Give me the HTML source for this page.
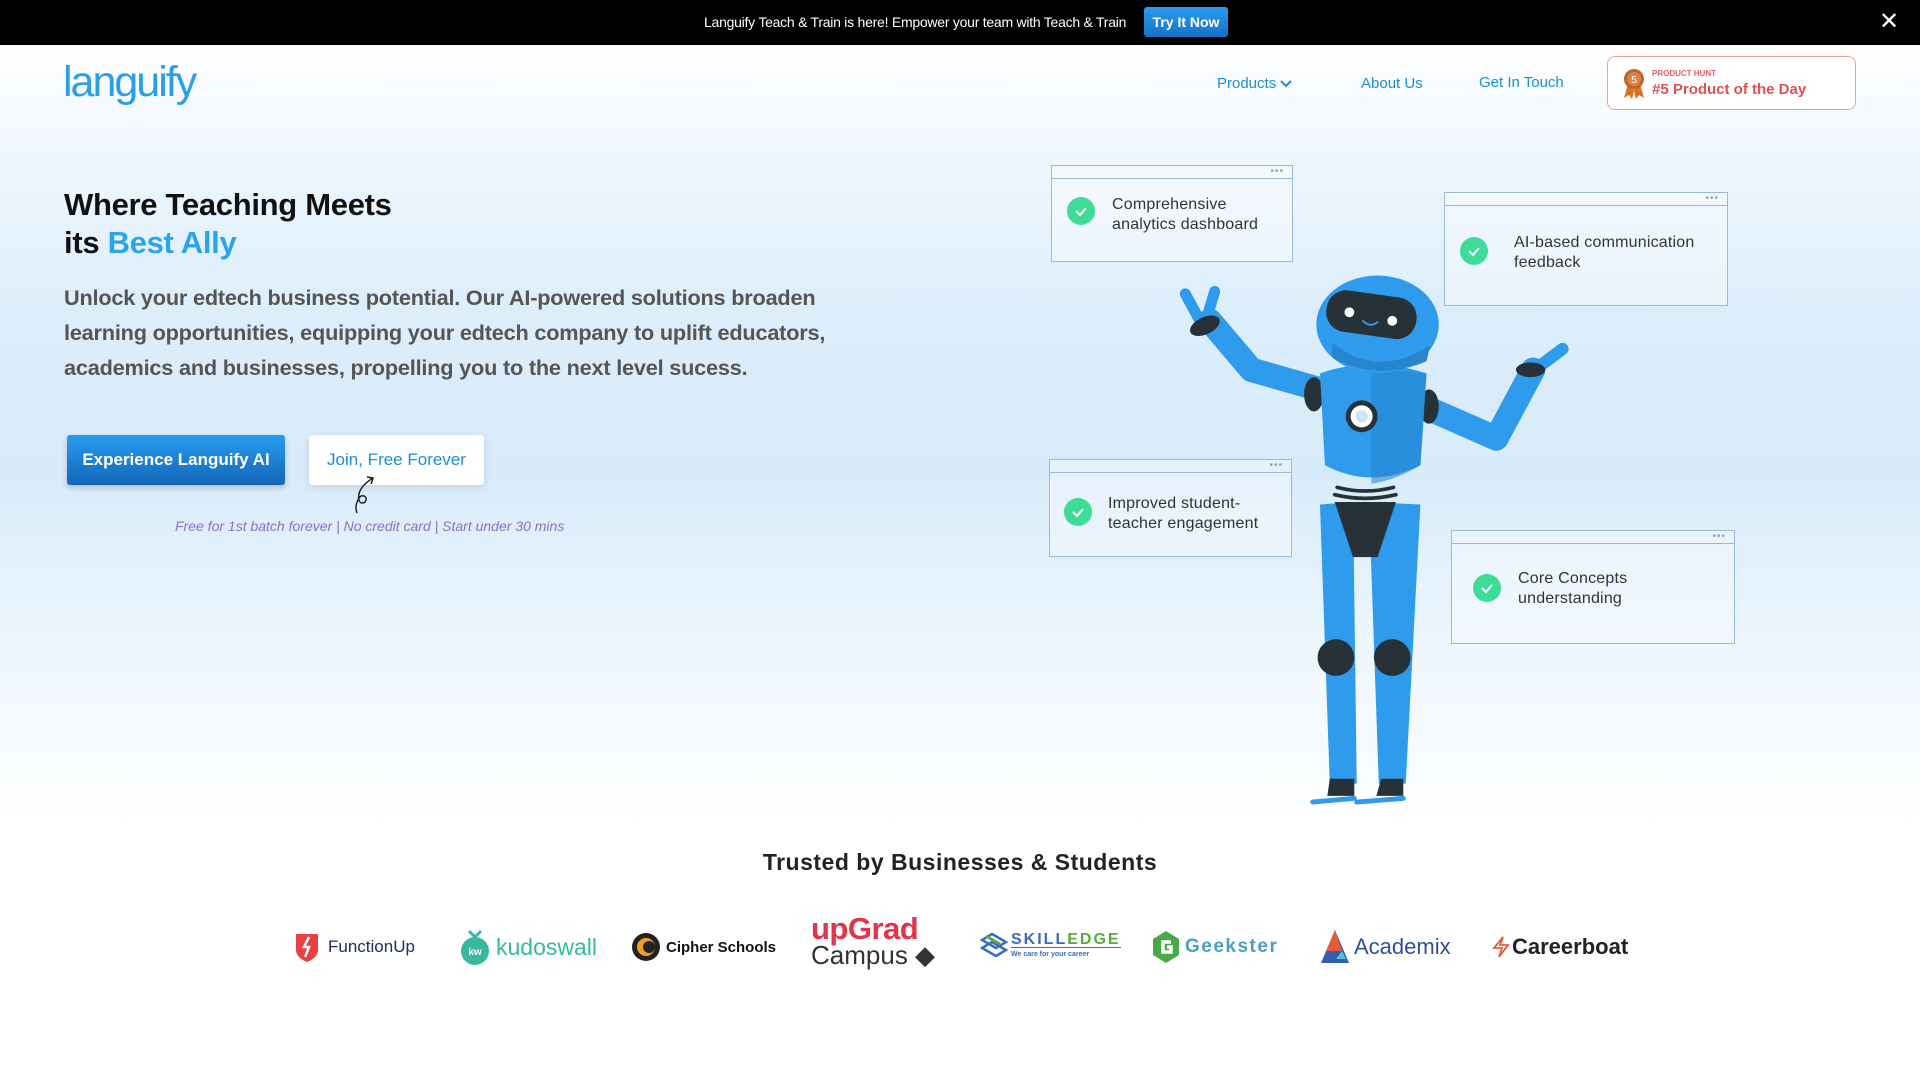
<!DOCTYPE html>
<html><head><meta charset="utf-8"><style>
*{margin:0;padding:0;box-sizing:border-box}
body{width:1920px;height:1080px;overflow:hidden;font-family:"Liberation Sans",sans-serif;background:#fff;position:relative}
.top{position:absolute;left:0;top:0;width:1920px;height:45px;background:#000;color:#fff}
.top .t{position:absolute;left:704px;top:14px;font-size:14px;letter-spacing:-0.25px}
.top .b{position:absolute;left:1144px;top:7px;width:84px;height:30px;background:linear-gradient(#2a9cf0,#1572c8);border-radius:3px;color:#fff;font-size:14px;font-weight:bold;text-align:center;line-height:30px}
.top .x{position:absolute;left:1879px;top:10px;font-size:24px;line-height:24px}
.hero{position:absolute;left:0;top:45px;width:1920px;height:780px;background:linear-gradient(180deg,#fff 0%,#f3f9fe 10%,#dcedfb 35%,#d8ebfa 55%,#ebf5fd 75%,#fff 100%)}
.logo{position:absolute;left:63px;top:58px;font-size:43px;color:#2a9fe8;letter-spacing:-2px;font-weight:normal}
.nav{position:absolute;top:75px;font-size:15px;color:#1a8fd8}
.badge{position:absolute;left:1607px;top:56px;width:249px;height:54px;border:1.5px solid #e8a0a0;border-radius:8px;background:#fff}
.badge .s{position:absolute;left:44px;top:12px;font-size:8px;font-weight:bold;color:#e46060}
.badge .l{position:absolute;left:44px;top:24px;font-size:15px;font-weight:bold;color:#e05050}
h1{position:absolute;left:64px;top:186px;font-size:31px;line-height:38px;color:#111;font-weight:bold;letter-spacing:-0.3px}
h1 span{color:#2aa5ec}
.p{position:absolute;left:64px;top:280px;width:800px;font-size:21.7px;line-height:35px;color:#555;font-weight:bold;letter-spacing:-0.2px}
.b1{position:absolute;left:67px;top:435px;width:218px;height:50px;background:linear-gradient(#2a9cf0,#1366b8);color:#fff;font-size:17px;font-weight:bold;text-align:center;line-height:50px;border-radius:3px;box-shadow:0 3px 6px rgba(0,0,0,.2)}
.b2{position:absolute;left:309px;top:435px;width:175px;height:50px;background:#fff;color:#1a8fd8;font-size:17px;text-align:center;line-height:50px;border-radius:3px;box-shadow:0 2px 8px rgba(0,0,0,.12)}
.sm{position:absolute;left:175px;top:518px;font-size:14px;font-style:italic;color:#8a70c8}
.card{position:absolute;border:1.5px solid #9bbad6;background:rgba(255,255,255,.35)}
.card .bar{position:absolute;left:0;right:0;top:12px;border-top:1.5px solid #9bbad6}
.card .d{position:absolute;right:8px;top:0;font-size:10px;color:#8aa;letter-spacing:1px}
.card .c{position:absolute;width:30px;height:30px}
.card .tx{position:absolute;font-size:16px;line-height:20px;color:#333;letter-spacing:.2px}
.tr{position:absolute;left:0;width:1920px;top:849px;text-align:center;font-size:23px;font-weight:bold;color:#222;letter-spacing:.5px}
.lg{position:absolute;top:929px;height:36px;display:flex;align-items:center;font-weight:bold}
</style></head><body>
<div class="top"><div class="t">Languify Teach &amp; Train is here! Empower your team with Teach &amp; Train</div><div class="b">Try It Now</div><div class="x">✕</div></div>
<div class="hero"></div>
<div class="logo">languify</div>
<div class="nav" style="left:1217px">Products <svg width="12" height="8" viewBox="0 0 12 8"><path d="M1 1l5 5 5-5" stroke="#1a8fd8" stroke-width="2" fill="none"/></svg></div>
<div class="nav" style="left:1361px">About Us</div>
<div class="nav" style="left:1479px;top:74px">Get In Touch</div>
<div class="badge"><svg style="position:absolute;left:14px;top:11px" width="24" height="32" viewBox="0 0 24 32"><path d="M6 16l-4 14 5-3 3 4 3-12z M18 16l4 14-5-3-3 4-3-12z" fill="#d9731f"/><circle cx="12" cy="11" r="10" fill="#c0642a"/><circle cx="12" cy="11" r="7" fill="#d98447"/><text x="12" y="15" font-size="10" fill="#fff" text-anchor="middle" font-family="Liberation Sans">5</text></svg><div class="s">PRODUCT HUNT</div><div class="l">#5 Product of the Day</div></div>
<h1>Where Teaching Meets<br>its <span>Best Ally</span></h1>
<div class="p">Unlock your edtech business potential. Our AI-powered solutions broaden learning opportunities, equipping your edtech company to uplift educators, academics and businesses, propelling you to the next level sucess.</div>
<div class="b1">Experience Languify AI</div>
<div class="b2">Join, Free Forever</div>
<svg style="position:absolute;left:345px;top:474px" width="30" height="42" viewBox="0 0 30 42"><path d="M28 4C18 10 12 18 14 26c1 4 6 4 7 0 1-4-4-6-7-2-3 5-4 10-2 15" stroke="#222" stroke-width="1.5" fill="none"/><path d="M22 3l6 1-2 6" stroke="#222" stroke-width="1.5" fill="none"/></svg>
<div class="sm">Free for 1st batch forever | No credit card | Start under 30 mins</div>

<svg style="position:absolute;left:0;top:0" width="1920" height="1080" viewBox="0 0 1568 882">
<g stroke-linecap="round" stroke-linejoin="round">
<path d="M1085 320 L1022 302 L988 262" stroke="#2f9bec" stroke-width="20" fill="none"/>
<path d="M1158 330 L1222 358 L1252 302" stroke="#2f9bec" stroke-width="20" fill="none"/>
<path d="M980 262 L968 240 M986 258 L992 238" stroke="#2f9bec" stroke-width="9" fill="none"/>
<path d="M1256 300 L1276 285" stroke="#2f9bec" stroke-width="10" fill="none"/>
<ellipse cx="984" cy="266" rx="13" ry="7" fill="#263238" transform="rotate(-25 984 266)"/>
<ellipse cx="1250" cy="302" rx="12" ry="6" fill="#263238"/>
<ellipse cx="1073" cy="322" rx="8" ry="14" fill="#263238"/>
<ellipse cx="1167" cy="332" rx="8" ry="14" fill="#263238"/>
<path d="M1078 305 Q1120 290 1165 305 L1160 380 Q1120 400 1082 380 Z" fill="#2f9bec"/>
<path d="M1120 300 L1165 305 L1160 380 Q1140 392 1120 395 Z" fill="#2785d0" opacity=".6"/>
<circle cx="1112" cy="340" r="13" fill="#263238"/><circle cx="1112" cy="340" r="9" fill="#fff"/><circle cx="1112" cy="340" r="5" fill="#cfe3f3"/>
<path d="M1092 398 Q1115 404 1138 398 M1090 404 Q1115 410 1140 404" stroke="#263238" stroke-width="3" fill="none"/>
<path d="M1078 412 L1105 410 L1108 640 L1086 640 Z" fill="#2f9bec"/>
<path d="M1118 410 L1160 412 L1148 640 L1126 640 Z" fill="#2f9bec"/>
<path d="M1090 410 L1140 410 L1125 455 L1105 455 Z" fill="#263238"/>
<circle cx="1091" cy="537" r="15" fill="#263238"/><circle cx="1137" cy="537" r="15" fill="#263238"/>
<path d="M1086 636 h20 v14 h-22 z M1128 636 h18 v14 h-22 z" fill="#263238"/>
<path d="M1072 655 L1106 652 M1108 655 L1146 652" stroke="#2f9bec" stroke-width="4"/>
<ellipse cx="1125" cy="265" rx="50" ry="40" fill="#2f9bec"/>
<path d="M1088 280 Q1125 310 1168 282 L1165 295 Q1125 312 1088 292 Z" fill="#2785d0"/>
<rect x="1083" y="240" width="74" height="34" rx="16" fill="#263238" transform="rotate(8 1120 257)"/>
<circle cx="1102" cy="255" r="4" fill="#fff"/><circle cx="1137" cy="262" r="4" fill="#fff"/>
<path d="M1113 262 Q1119 268 1125 263" stroke="#2f9bec" stroke-width="1.5" fill="none"/>
</g>
</svg>

<div class="card" style="left:1051px;top:165px;width:242px;height:97px"><div class="bar"></div><div class="d">•••</div><svg class="c" style="left:14px;top:30px" viewBox="0 0 30 30"><circle cx="15" cy="15" r="14" fill="#3ddc97"/><path d="M10 15l4 4 6-7" stroke="#fff" stroke-width="2" fill="none"/></svg><div class="tx" style="left:60px;top:29px">Comprehensive<br>analytics dashboard</div></div>
<div class="card" style="left:1444px;top:192px;width:284px;height:114px"><div class="bar"></div><div class="d">•••</div><svg class="c" style="left:14px;top:43px" viewBox="0 0 30 30"><circle cx="15" cy="15" r="14" fill="#3ddc97"/><path d="M10 15l4 4 6-7" stroke="#fff" stroke-width="2" fill="none"/></svg><div class="tx" style="left:69px;top:40px">AI-based communication<br>feedback</div></div>
<div class="card" style="left:1049px;top:459px;width:243px;height:98px"><div class="bar"></div><div class="d">•••</div><svg class="c" style="left:13px;top:37px" viewBox="0 0 30 30"><circle cx="15" cy="15" r="14" fill="#3ddc97"/><path d="M10 15l4 4 6-7" stroke="#fff" stroke-width="2" fill="none"/></svg><div class="tx" style="left:58px;top:34px">Improved student-<br>teacher engagement</div></div>
<div class="card" style="left:1451px;top:530px;width:284px;height:114px"><div class="bar"></div><div class="d">•••</div><svg class="c" style="left:20px;top:42px" viewBox="0 0 30 30"><circle cx="15" cy="15" r="14" fill="#3ddc97"/><path d="M10 15l4 4 6-7" stroke="#fff" stroke-width="2" fill="none"/></svg><div class="tx" style="left:66px;top:38px">Core Concepts<br>understanding</div></div>

<div class="tr">Trusted by Businesses &amp; Students</div>
<div class="lg" style="left:294px"><svg width="26" height="30" viewBox="0 0 26 30"><path d="M2 2h22v16c0 6-6 10-11 12C8 28 2 24 2 18z" fill="#e94040"/><path d="M15 5l-5 10h5l-4 10" stroke="#fff" stroke-width="2.5" fill="none"/></svg><span style="margin-left:8px;font-size:17px;color:#1e2a6a;font-weight:normal">FunctionUp</span></div>
<div class="lg" style="left:459px"><svg width="32" height="36" viewBox="0 0 32 36"><path d="M10 2l6 6 6-6" stroke="#39b8a0" stroke-width="3" fill="none"/><circle cx="16" cy="22" r="14" fill="#39b8a0"/><text x="16" y="26" font-size="10" fill="#fff" text-anchor="middle" font-family="Liberation Sans">kw</text></svg><span style="margin-left:5px;font-size:23px;color:#39b8a0;font-weight:normal">kudoswall</span></div>
<div class="lg" style="left:631px"><svg width="30" height="30" viewBox="0 0 30 30"><circle cx="15" cy="15" r="14" fill="#222"/><circle cx="15" cy="15" r="9" fill="#f0a020"/><circle cx="18" cy="15" r="6" fill="#222"/></svg><span style="margin-left:5px;font-size:15px;color:#111">Cipher Schools</span></div>
<div class="lg" style="left:811px;top:916px;flex-direction:column;align-items:flex-start;line-height:26px;height:60px"><span style="font-size:31px;color:#e5334b;letter-spacing:-0.5px">upGrad</span><span style="font-size:26px;color:#333;font-weight:normal">Campus ◆</span></div>
<div class="lg" style="left:980px"><svg width="28" height="30" viewBox="0 0 28 30"><path d="M2 8l10-6 14 8-10 6z M2 16l10-6 14 8-10 6z" stroke="#3a6bc0" stroke-width="2.5" fill="none"/><path d="M6 4l14 8" stroke="#5aaa40" stroke-width="3"/></svg><div style="margin-left:3px;line-height:14px"><div style="font-size:16px;color:#3a6bc0;letter-spacing:2px">SKILL<span style="color:#5aaa40">EDGE</span></div><div style="font-size:7px;color:#3a6bc0;border-top:1.5px solid #3a6bc0">We care for your career</div></div></div>
<div class="lg" style="left:1151px"><svg width="30" height="34" viewBox="0 0 30 34"><path d="M15 1l13 8v16l-13 8-13-8V9z" fill="#4aa84a"/><path d="M20 12h-8v10h8v-5h-4" stroke="#fff" stroke-width="3.5" fill="none"/></svg><span style="margin-left:4px;font-size:19px;color:#4aa0c0;letter-spacing:1.5px">Geekster</span></div>
<div class="lg" style="left:1320px"><svg width="30" height="36" viewBox="0 0 30 36"><path d="M15 1L1 34h28z" fill="#2f5fb0"/><path d="M15 1L6 22h16z" fill="#e85a3a"/><path d="M22 22l4 8h-10z" fill="#59c0d8"/></svg><span style="margin-left:4px;font-size:22px;color:#2f4f9a;font-weight:normal">Academix</span></div>
<div class="lg" style="left:1491px"><svg width="20" height="24" viewBox="0 0 20 24"><path d="M12 2L3 13h8l-3 9 9-12h-8z" stroke="#e85a3a" stroke-width="1.8" fill="none"/></svg><span style="margin-left:1px;font-size:22px;color:#222">Careerboat</span></div>
</body></html>
